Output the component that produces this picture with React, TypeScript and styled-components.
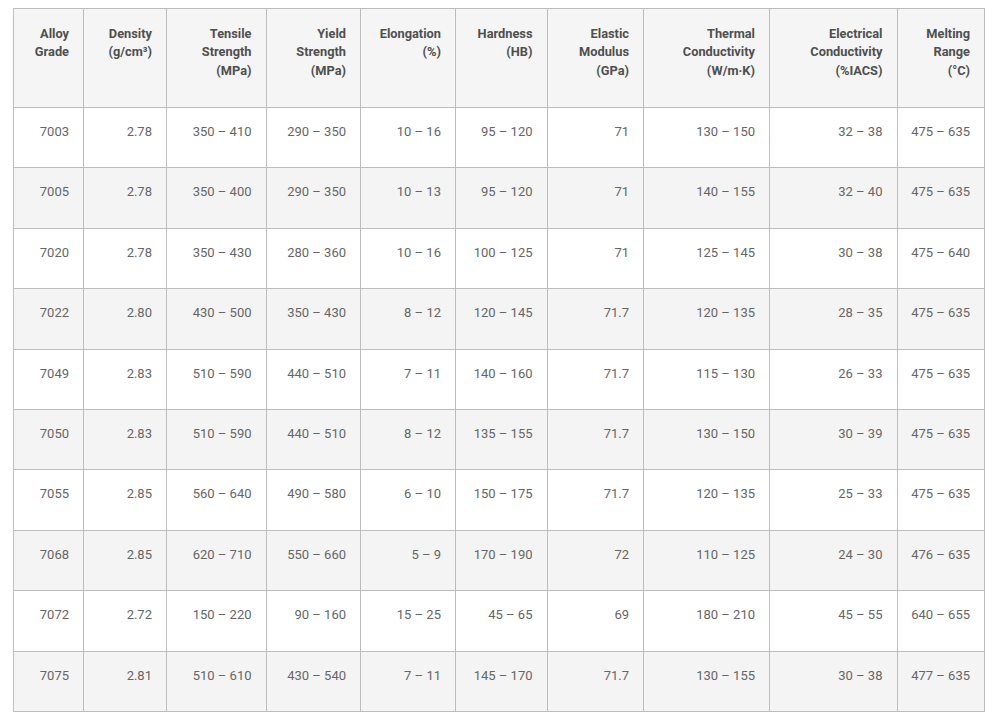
import styled, { createGlobalStyle } from 'styled-components';

const GlobalStyle = createGlobalStyle`
  html, body {
    margin: 0;
    padding: 0;
    background: #fff;
  }
  body {
    font-family: Roboto, "Liberation Sans", Arial, sans-serif;
  }
`;

const Wrapper = styled.div`
  padding: 8px 11px 8px 13px;
`;

const Table = styled.table`
  width: 971px;
  table-layout: fixed;
  border-collapse: collapse;
  font-family: Roboto, "Liberation Sans", Arial, sans-serif;
`;

const HeadCell = styled.th`
  border: 1px solid #bdbdbd;
  background: #f5f5f5;
  color: #4f4f4f;
  font-size: 12.8px;
  font-weight: 700;
  line-height: 18.5px;
  text-align: right;
  vertical-align: top;
  padding: 15.5px 14px 0 8px;
  height: 82.5px;
`;

const Row = styled.tr<{ $shaded: boolean }>`
  background: ${(p) => (p.$shaded ? '#f4f4f4' : '#fff')};
`;

const Cell = styled.td`
  border: 1px solid #bdbdbd;
  color: #666;
  font-size: 13px;
  line-height: 20px;
  text-align: right;
  vertical-align: top;
  padding: 14px 14px 0 8px;
  height: 45.4px;
  white-space: nowrap;
`;

const widths = [70, 83, 99.5, 94.5, 95, 91.5, 96.5, 126, 127.5, 87.5];

const headers: string[][] = [
  ['Alloy', 'Grade'],
  ['Density', '(g/cm³)'],
  ['Tensile', 'Strength', '(MPa)'],
  ['Yield', 'Strength', '(MPa)'],
  ['Elongation', '(%)'],
  ['Hardness', '(HB)'],
  ['Elastic', 'Modulus', '(GPa)'],
  ['Thermal', 'Conductivity', '(W/m·K)'],
  ['Electrical', 'Conductivity', '(%IACS)'],
  ['Melting', 'Range', '(°C)'],
];

const rows: string[][] = [
  ['7003', '2.78', '350 – 410', '290 – 350', '10 – 16', '95 – 120', '71', '130 – 150', '32 – 38', '475 – 635'],
  ['7005', '2.78', '350 – 400', '290 – 350', '10 – 13', '95 – 120', '71', '140 – 155', '32 – 40', '475 – 635'],
  ['7020', '2.78', '350 – 430', '280 – 360', '10 – 16', '100 – 125', '71', '125 – 145', '30 – 38', '475 – 640'],
  ['7022', '2.80', '430 – 500', '350 – 430', '8 – 12', '120 – 145', '71.7', '120 – 135', '28 – 35', '475 – 635'],
  ['7049', '2.83', '510 – 590', '440 – 510', '7 – 11', '140 – 160', '71.7', '115 – 130', '26 – 33', '475 – 635'],
  ['7050', '2.83', '510 – 590', '440 – 510', '8 – 12', '135 – 155', '71.7', '130 – 150', '30 – 39', '475 – 635'],
  ['7055', '2.85', '560 – 640', '490 – 580', '6 – 10', '150 – 175', '71.7', '120 – 135', '25 – 33', '475 – 635'],
  ['7068', '2.85', '620 – 710', '550 – 660', '5 – 9', '170 – 190', '72', '110 – 125', '24 – 30', '476 – 635'],
  ['7072', '2.72', '150 – 220', '90 – 160', '15 – 25', '45 – 65', '69', '180 – 210', '45 – 55', '640 – 655'],
  ['7075', '2.81', '510 – 610', '430 – 540', '7 – 11', '145 – 170', '71.7', '130 – 155', '30 – 38', '477 – 635'],
];

export default function App() {
  return (
    <>
      <GlobalStyle />
      <Wrapper>
        <Table>
          <colgroup>
            {widths.map((w, i) => (
              <col key={i} style={{ width: w }} />
            ))}
          </colgroup>
          <thead>
            <tr>
              {headers.map((lines, i) => (
                <HeadCell key={i}>
                  {lines.map((l, j) => (
                    <span key={j}>
                      {l}
                      {j < lines.length - 1 && <br />}
                    </span>
                  ))}
                </HeadCell>
              ))}
            </tr>
          </thead>
          <tbody>
            {rows.map((r, i) => (
              <Row key={r[0]} $shaded={i % 2 === 1}>
                {r.map((v, j) => (
                  <Cell key={j}>{v}</Cell>
                ))}
              </Row>
            ))}
          </tbody>
        </Table>
      </Wrapper>
    </>
  );
}
